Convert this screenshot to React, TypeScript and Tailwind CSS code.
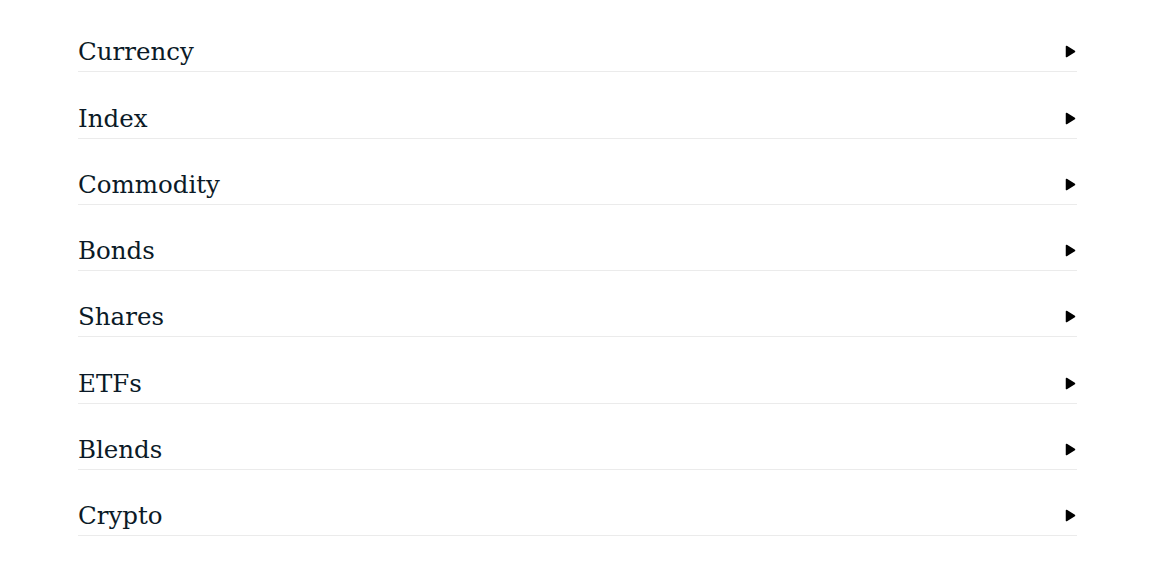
import React from 'react';

const items = ['Currency', 'Index', 'Commodity', 'Bonds', 'Shares', 'ETFs', 'Blends', 'Crypto'];

const Arrow: React.FC = () => (
  <svg width="11" height="13" viewBox="0 0 11 13" className="mb-[9px] mr-[1px]">
    <path d="M1.5 1.5 L9.5 6.5 L1.5 11.5 Z" fill="#000" stroke="#000" strokeWidth="1.5" strokeLinejoin="round" />
  </svg>
);

const App: React.FC = () => {
  return (
    <div className="w-[1165px] h-[562px] bg-white overflow-hidden">
      <ul className="ml-[78px] w-[999px] pt-[6px]" style={{ fontFamily: '"DejaVu Serif", serif' }}>
        {items.map(item => (
          <li
            key={item}
            className="h-[66.3px] box-border flex items-end justify-between border-b border-[#ebebeb] pb-[4px]"
          >
            <span className="text-[24.5px] leading-[30px] text-[#0b1a27]">{item}</span>
            <Arrow />
          </li>
        ))}
      </ul>
    </div>
  );
};

export default App;
